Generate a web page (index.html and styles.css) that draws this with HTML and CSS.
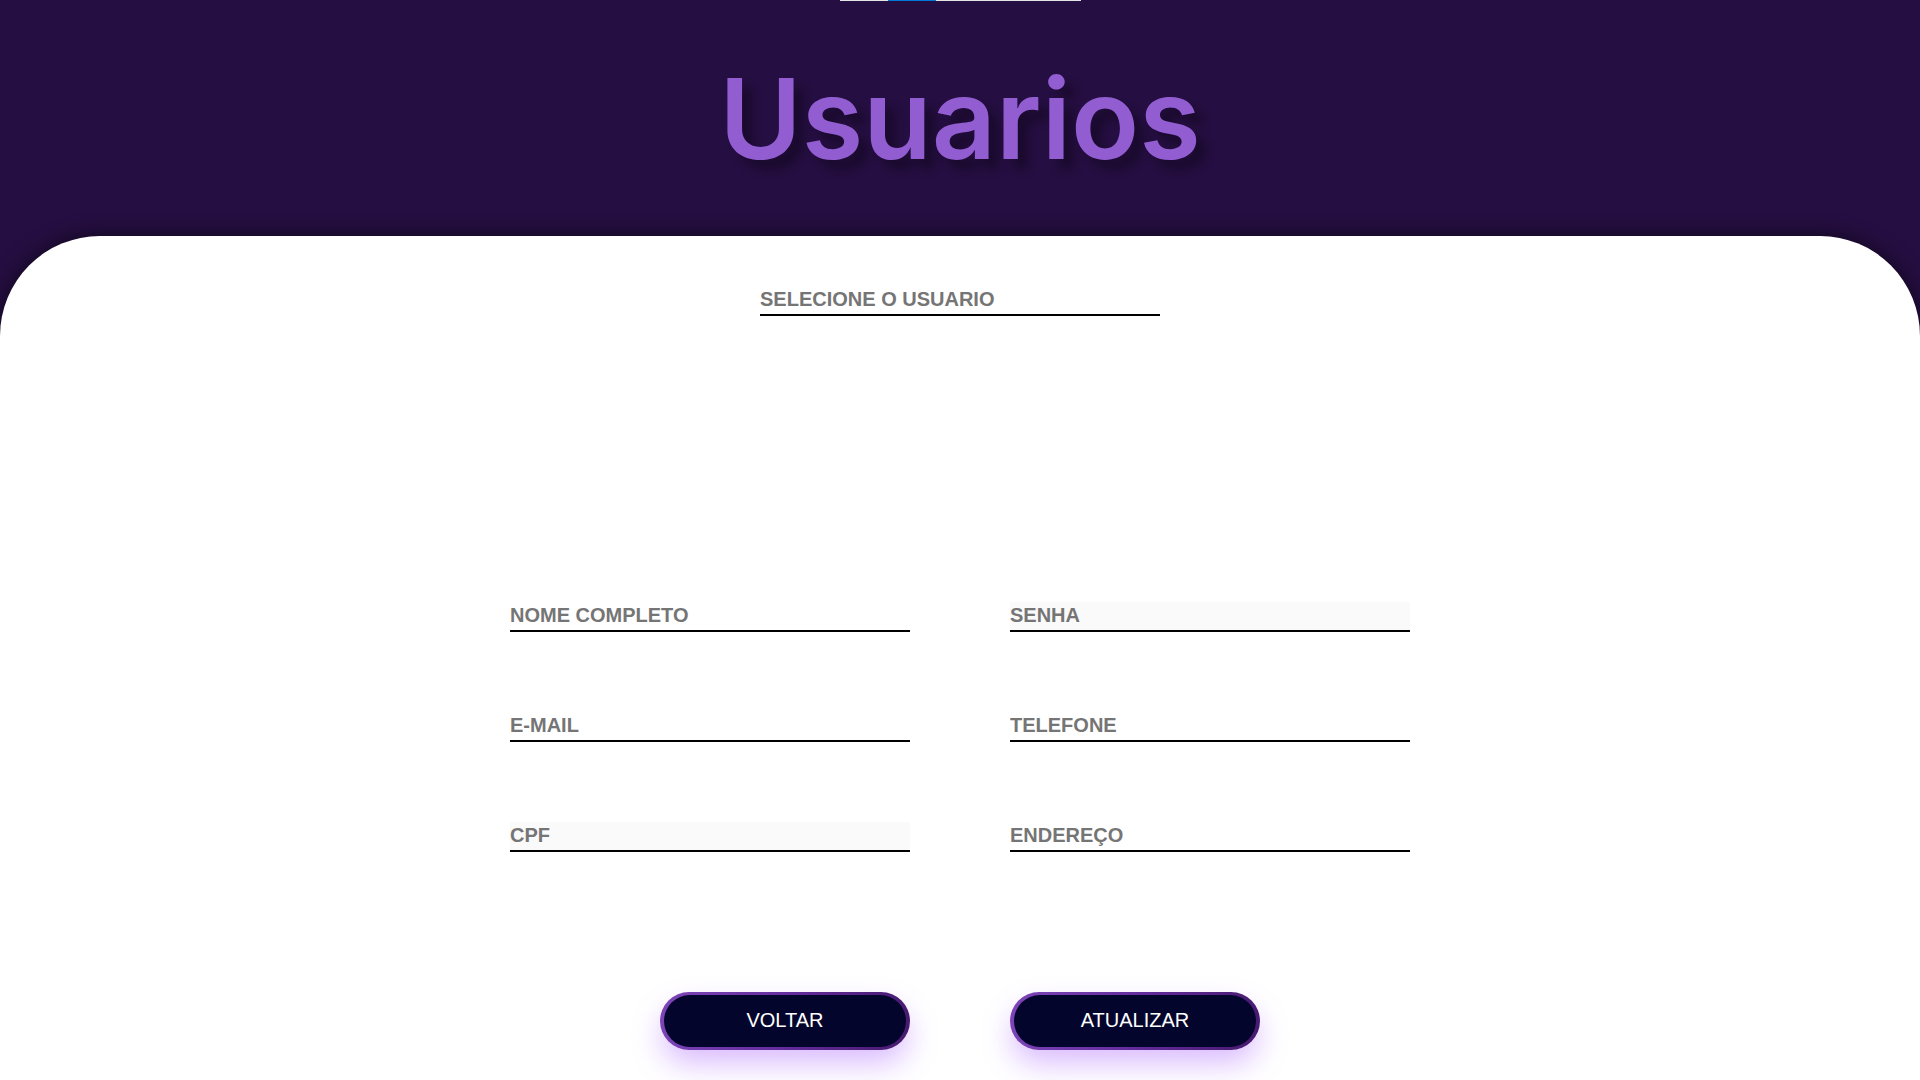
FILE: index.html
```
<!DOCTYPE html>
<html lang="pt-BR">
<head>
<meta charset="utf-8">
<title>Usuarios</title>
<link rel="stylesheet" href="styles.css">
</head>
<body>
<div class="top-strip"></div>
<header class="header"><h1 class="title">Usuarios</h1></header>
<main class="panel">
<form class="form">
<input class="field" type="text" placeholder="SELECIONE O USUARIO" aria-label="Selecione o usuario">
<div class="grid">
<input class="field" type="text" placeholder="NOME COMPLETO" aria-label="Nome completo">
<input class="field field-locked" type="password" placeholder="SENHA" aria-label="Senha" readonly>
<input class="field" type="email" placeholder="E-MAIL" aria-label="E-mail">
<input class="field" type="tel" placeholder="TELEFONE" aria-label="Telefone">
<input class="field field-locked" type="text" placeholder="CPF" aria-label="CPF" readonly>
<input class="field" type="text" placeholder="ENDEREÇO" aria-label="Endereço">
</div>
<div class="actions">
<button class="button" type="button"><span class="button-label">VOLTAR</span></button>
<button class="button" type="button"><span class="button-label">ATUALIZAR</span></button>
</div>
</form>
</main>
</body>
</html>
```
FILE: styles.css
```
* {
  box-sizing: border-box;
}

body {
  position: relative;
  display: flex;
  flex-direction: column;
  min-height: 100vh;
  margin: 0;
  background: #250e41;
  font-family: "Liberation Sans", Arial, sans-serif;
}

.top-strip {
  position: absolute;
  top: 0;
  left: 50%;
  width: 241px;
  height: 1px;
  margin-left: -120px;
  background: linear-gradient(90deg, #e5e5e5 48px, #0078d7 48px, #0078d7 96px, #e5e5e5 96px);
}

.header {
  padding: 50px 0;
  text-align: center;
}

.title {
  margin: 0;
  color: #915dd1;
  font: 600 112px/136px Inter, sans-serif;
  text-shadow: 10px 10px 10px rgba(0, 0, 0, 0.3);
}

.panel {
  flex: 1;
  padding: 50px 20px 30px;
  border-radius: 100px 100px 0 0;
  background: #fff;
  box-shadow: 0 0 20px rgba(0, 0, 0, 0.6);
}

.form {
  display: flex;
  flex-direction: column;
  align-items: center;
}

.field {
  width: 400px;
  max-width: 100%;
  height: 30px;
  padding: 0 0 2px;
  border: 0;
  border-bottom: 2px solid #000;
  border-radius: 0;
  outline: 0;
  background: transparent;
  font: bold 20px/24px "Liberation Sans", Arial, sans-serif;
}

.field::placeholder {
  color: #757575;
  opacity: 1;
}

.field-locked {
  background: #fafafa;
}

.grid {
  display: grid;
  grid-template-columns: auto auto;
  gap: 80px 100px;
  margin-top: 286px;
}

.actions {
  display: flex;
  gap: 100px;
  margin-top: 140px;
}

.button {
  display: flex;
  width: 250px;
  height: 58px;
  padding: 3px 4px;
  border: 0;
  border-radius: 30px;
  background: linear-gradient(100deg, #7d45b8, #642c9c 50%, #46196f);
  box-shadow: 0 15px 30px -2px rgba(151, 65, 252, 0.36);
  color: #fff;
  font: 20px/24px "Liberation Sans", Arial, sans-serif;
}

.button-label {
  display: flex;
  flex: 1;
  align-items: center;
  justify-content: center;
  height: 100%;
  padding-bottom: 2px;
  border-radius: 27px;
  background: #04052c;
}
```
